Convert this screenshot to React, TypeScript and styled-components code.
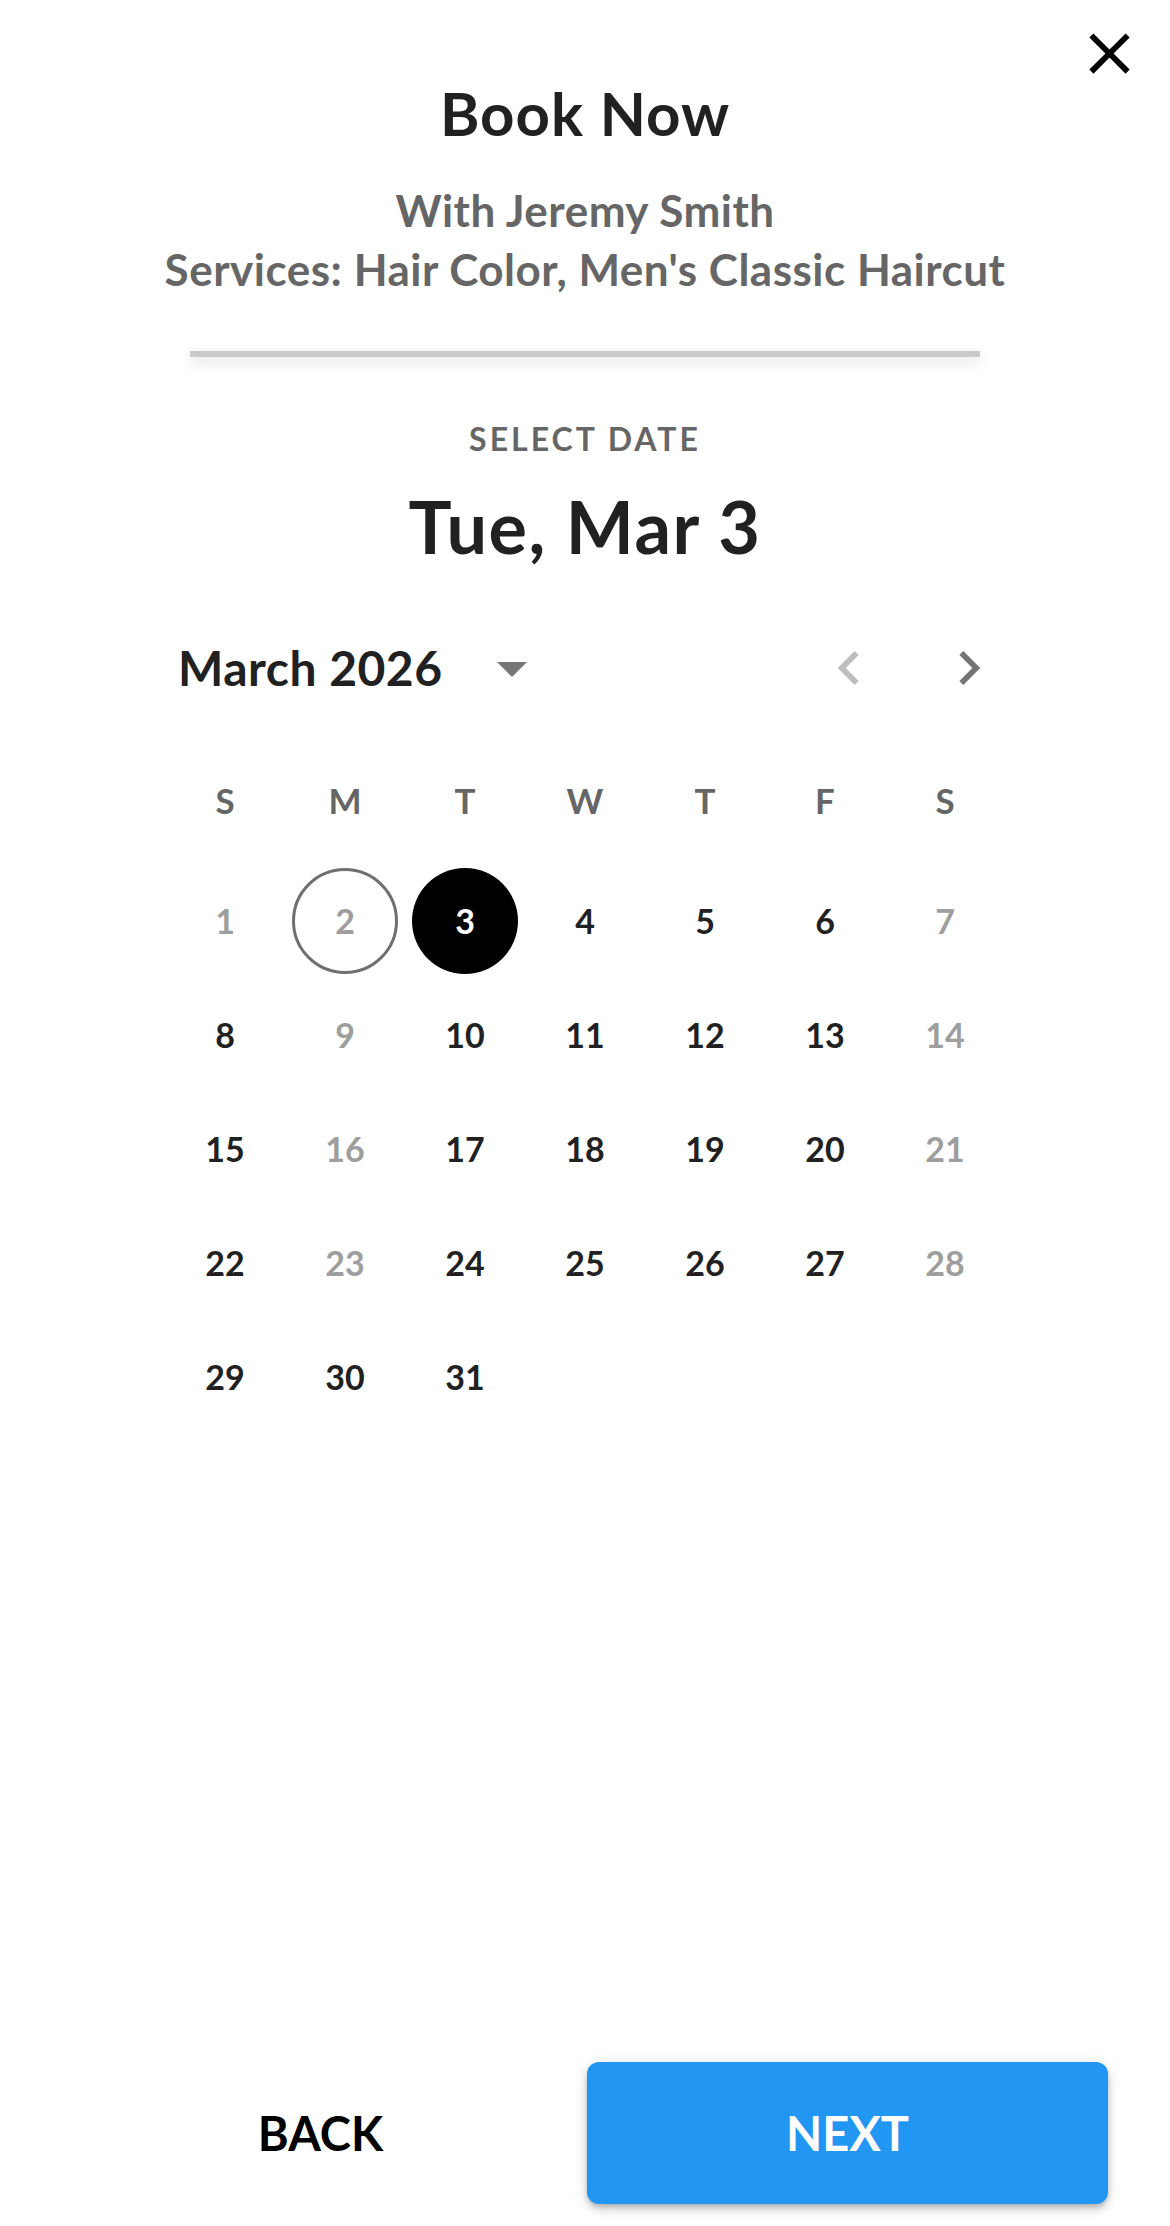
import React from "react";
import styled, { createGlobalStyle } from "styled-components";
import { MdClose, MdChevronLeft, MdChevronRight, MdArrowDropDown } from "react-icons/md";

const GlobalStyle = createGlobalStyle`
  html, body {
    margin: 0;
    padding: 0;
    background: #ffffff;
  }
  body {
    font-family: "Lato", "Noto Sans", "Liberation Sans", sans-serif;
  }
  * {
    box-sizing: border-box;
  }
`;

const Page = styled.div`
  position: relative;
  height: 100vh;
  display: flex;
  flex-direction: column;
  align-items: center;
  background: #fff;
`;

const CloseButton = styled.button`
  position: absolute;
  top: 19px;
  right: 26px;
  width: 69px;
  height: 69px;
  padding: 0;
  border: none;
  background: none;
  display: flex;
  color: #000;
`;

const Title = styled.h1`
  margin: 77px 0 0;
  font-size: 60px;
  line-height: 1.2;
  font-weight: 700;
  letter-spacing: 1px;
  color: #212121;
`;

const Subtitle = styled.div`
  margin-top: 32px;
  font-size: 44px;
  line-height: 59px;
  font-weight: 700;
  letter-spacing: 0.5px;
  color: #666;
  text-align: center;
`;

const Divider = styled.div`
  margin-top: 52px;
  width: 790px;
  height: 6px;
  background: #c9c9c9;
  box-shadow: 0 6px 14px rgba(0, 0, 0, 0.12), 0 0 10px rgba(0, 0, 0, 0.05);
`;

const Overline = styled.div`
  margin-top: 63px;
  font-size: 32px;
  line-height: 1.2;
  font-weight: 700;
  letter-spacing: 3px;
  color: #666;
`;

const SelectedDate = styled.div`
  margin-top: 25px;
  font-size: 72px;
  line-height: 1.2;
  font-weight: 700;
  letter-spacing: 1.5px;
  color: #212121;
`;

const MonthRow = styled.div`
  margin-top: 64px;
  width: 840px;
  height: 68px;
  padding: 0 2px 0 13px;
  display: flex;
  align-items: center;
  justify-content: space-between;
`;

const MonthPicker = styled.div`
  display: flex;
  align-items: center;
  gap: 33px;
  font-size: 48px;
  line-height: 1.2;
  font-weight: 700;
  letter-spacing: 0.5px;
  color: #212121;
`;

const Nav = styled.div`
  display: flex;
  align-items: center;
  gap: 52px;
`;

const NavButton = styled.button<{ $enabled?: boolean }>`
  width: 68px;
  height: 68px;
  padding: 0;
  border: none;
  background: none;
  display: flex;
  color: ${(p) => (p.$enabled ? "#757575" : "#bdbdbd")};
`;

const Grid = styled.div`
  display: grid;
  grid-template-columns: repeat(7, 120px);
  width: 840px;
`;

const WeekHeader = styled(Grid)`
  margin-top: 77px;
`;

const WeekDay = styled.div`
  text-align: center;
  font-size: 35px;
  line-height: 42px;
  font-weight: 700;
  color: #666;
`;

const Days = styled(Grid)`
  margin-top: 43px;
  grid-auto-rows: 114px;
`;

const Cell = styled.div`
  display: flex;
  align-items: center;
  justify-content: center;
`;

const Day = styled.div<{ $muted?: boolean; $selected?: boolean; $today?: boolean }>`
  width: 106px;
  height: 106px;
  border-radius: 50%;
  display: flex;
  align-items: center;
  justify-content: center;
  font-size: 34px;
  font-weight: 700;
  color: ${(p) => (p.$selected ? "#fff" : p.$muted ? "#9e9e9e" : "#212121")};
  background: ${(p) => (p.$selected ? "#000" : "transparent")};
  border: 3px solid ${(p) => (p.$today && !p.$selected ? "#6f6f6f" : "transparent")};
`;

const Footer = styled.div`
  margin-top: auto;
  margin-bottom: 22px;
  width: 100%;
  padding: 0 62px 0 60px;
  display: flex;
  gap: 6px;
`;

const ActionButton = styled.button<{ $primary?: boolean }>`
  flex: 1;
  height: 142px;
  border: none;
  border-radius: 12px;
  font-family: "Lato", "Noto Sans", sans-serif;
  font-size: 47px;
  font-weight: 700;
  color: ${(p) => (p.$primary ? "#fff" : "#000")};
  background: ${(p) => (p.$primary ? "#2196f3" : "transparent")};
  box-shadow: ${(p) =>
    p.$primary
      ? "0 3px 5px -1px rgba(0,0,0,0.2), 0 6px 10px 0 rgba(0,0,0,0.14), 0 1px 18px 0 rgba(0,0,0,0.08)"
      : "none"};
`;

const weekDays = ["S", "M", "T", "W", "T", "F", "S"];
const unavailable = new Set([1, 2, 7, 9, 14, 16, 21, 23, 28]);
const today = 2;
const selected = 3;
const days = Array.from({ length: 31 }, (_, i) => i + 1);

const App: React.FC = () => {
  return (
    <Page>
      <GlobalStyle />
      <CloseButton aria-label="Close">
        <MdClose size={69} />
      </CloseButton>

      <Title>Book Now</Title>
      <Subtitle>
        With Jeremy Smith
        <br />
        Services: Hair Color, Men's Classic Haircut
      </Subtitle>
      <Divider />

      <Overline>SELECT DATE</Overline>
      <SelectedDate>Tue, Mar 3</SelectedDate>

      <MonthRow>
        <MonthPicker>
          March 2026
          <MdArrowDropDown size={72} color="#777" />
        </MonthPicker>
        <Nav>
          <NavButton aria-label="Previous month">
            <MdChevronLeft size={68} />
          </NavButton>
          <NavButton $enabled aria-label="Next month">
            <MdChevronRight size={68} />
          </NavButton>
        </Nav>
      </MonthRow>

      <WeekHeader>
        {weekDays.map((d, i) => (
          <WeekDay key={i}>{d}</WeekDay>
        ))}
      </WeekHeader>

      <Days>
        {days.map((d) => (
          <Cell key={d}>
            <Day $muted={unavailable.has(d)} $selected={d === selected} $today={d === today}>
              {d}
            </Day>
          </Cell>
        ))}
      </Days>

      <Footer>
        <ActionButton>BACK</ActionButton>
        <ActionButton $primary>NEXT</ActionButton>
      </Footer>
    </Page>
  );
};

export default App;
